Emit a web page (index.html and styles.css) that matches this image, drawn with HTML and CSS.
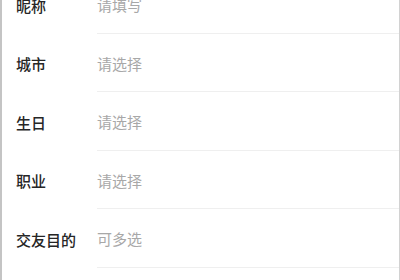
FILE: index.html
```html
<!DOCTYPE html>
<html lang="zh">
<head>
<meta charset="utf-8">
<link rel="stylesheet" href="styles.css">
</head>
<body>
<div class="frame">
  <div class="list">
    <div class="row"><div class="label">昵称</div><div class="field">请填写</div></div>
    <div class="row"><div class="label">城市</div><div class="field">请选择</div></div>
    <div class="row"><div class="label">生日</div><div class="field">请选择</div></div>
    <div class="row"><div class="label">职业</div><div class="field">请选择</div></div>
    <div class="row"><div class="label">交友目的</div><div class="field">可多选</div></div>
  </div>
</div>
</body>
</html>
```
FILE: styles.css
```css
html, body {
  margin: 0;
  padding: 0;
  background: #ffffff;
  overflow: hidden;
}
body {
  width: 400px;
  height: 280px;
  font-family: "Noto Sans CJK SC", "Noto Sans", sans-serif;
}
.frame {
  box-sizing: border-box;
  width: 400px;
  height: 280px;
  border-left: 2px solid #c4c4c4;
  border-right: 1px solid #d2d2d2;
  overflow: hidden;
}
.list {
  margin-top: -25px;
}
.row {
  display: flex;
  align-items: stretch;
  height: 58.5px;
}
.label {
  box-sizing: border-box;
  width: 95px;
  padding-left: 14px;
  display: flex;
  align-items: center;
  padding-top: 2px;
  font-size: 15px;
  font-weight: 500;
  color: #262626;
  white-space: nowrap;
}
.field {
  flex: 1;
  display: flex;
  align-items: center;
  padding-top: 2px;
  font-size: 15px;
  color: #a8a8a8;
  border-bottom: 1.5px solid #efefef;
}
```
